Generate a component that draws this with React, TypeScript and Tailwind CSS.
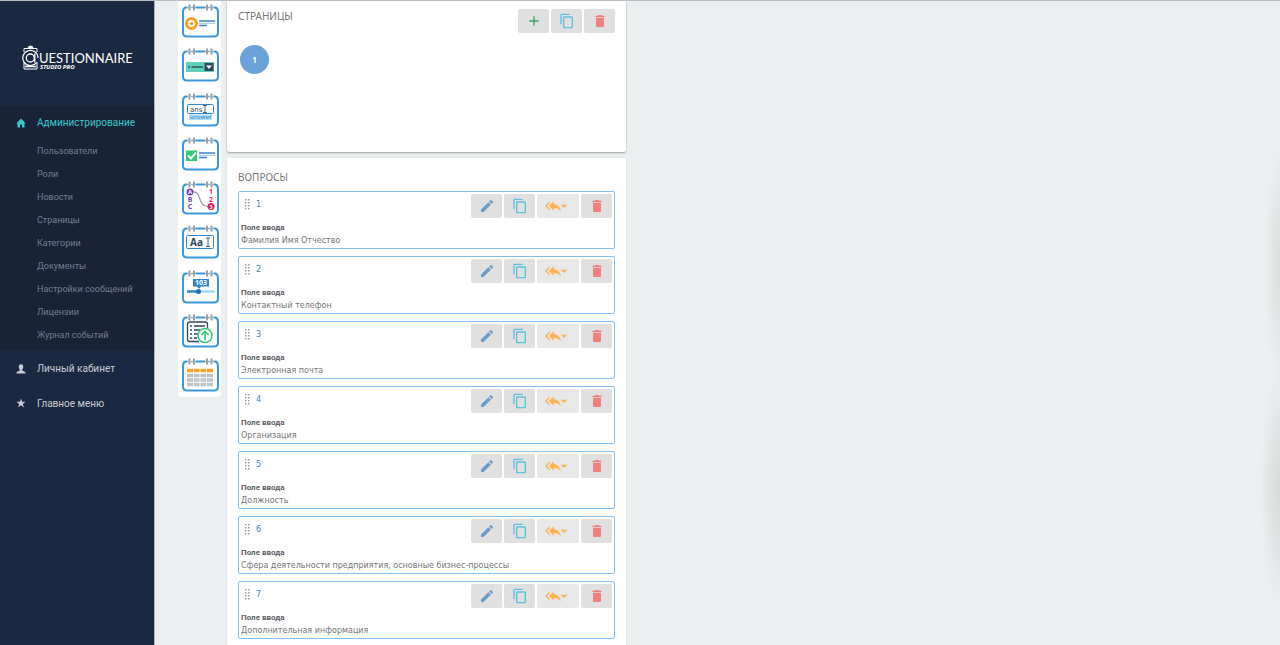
import type { ReactNode } from "react";
import { MdAdd, MdArrowDropDown, MdContentCopy, MdDelete, MdEdit, MdReplyAll } from "react-icons/md";

const adminLinks = [
  "Пользователи",
  "Роли",
  "Новости",
  "Страницы",
  "Категории",
  "Документы",
  "Настройки сообщений",
  "Лицензии",
  "Журнал событий",
];

const questions = [
  "Фамилия Имя Отчество",
  "Контактный телефон",
  "Электронная почта",
  "Организация",
  "Должность",
  "Сфера деятельности предприятия, основные бизнес-процессы",
  "Дополнительная информация",
];

function Logo() {
  return (
    <svg viewBox="0 0 114 30" className="h-[30px] w-[114px] text-white" fill="none" stroke="currentColor">
      <path d="M2 8V4.500H15V8M2 18V25H15V18" strokeWidth="1" />
      <path d="M6 4a2.500 2 0 0 1 5 0" fill="currentColor" strokeWidth="0.800" />
      <path d="M14.500 18.500A7.600 7.600 0 1 1 16 14" strokeWidth="1.200" />
      <circle cx="8.300" cy="14" r="4" strokeWidth="1.300" />
      <path d="M12.800 9.500V18.500M3 22.500h11" strokeWidth="1.300" />
      <text x="17" y="19" fontSize="13" fill="currentColor" stroke="none" className="font-['Lato']">
        UESTIONNAIRE
      </text>
      <text x="18" y="25" fontSize="6" fontStyle="italic" fontWeight="700" fill="currentColor" stroke="none" className="font-['Noto_Sans']">
        STUDIO PRO
      </text>
    </svg>
  );
}

function HomeIcon() {
  return (
    <svg viewBox="0 0 10 10" className="size-2.5" fill="currentColor">
      <path d="M5 .5 9.700 5.500H8.500V9.500H6V6.500H4V9.500H1.500V5.500H.3z" />
    </svg>
  );
}

function UserIcon() {
  return (
    <svg viewBox="0 0 10 10" className="size-2.5" fill="currentColor">
      <path d="M5 .3c1.600 0 2.300 1.200 2.200 2.600C7.100 4.500 6.500 5 6.300 5.600v.9c.4.700 3.200.9 3.200 2.200v.8h-9v-.8c0-1.300 2.800-1.500 3.200-2.200v-.9C3.500 5 2.900 4.500 2.800 2.900 2.700 1.500 3.400.3 5 .3z" />
    </svg>
  );
}

function StarIcon() {
  return (
    <svg viewBox="0 0 10 10" className="size-2.5" fill="currentColor">
      <path d="m5 .5 1.100 3.300h3.500L6.800 5.900l1.100 3.500L5 7.300 2.100 9.400l1.100-3.500L.4 3.800h3.500z" />
    </svg>
  );
}

function PaletteButton({ label, children }: { label: string; children: ReactNode }) {
  return (
    <button type="button" aria-label={label} className="block">
      <svg viewBox="0 0 38 34" className="h-[34px] w-[38px]" fill="none">
        <path
          d="M6 3.500H4.500Q2 4.500 2 8V28.500Q2 32.500 6 32.500H33Q37 32.500 37 28.500V8Q37 4.500 34.500 3.500H33M15 3.500H24"
          stroke="#3a97d9"
          strokeWidth="2"
        />
        <path d="M8.500 .5V6.500M13 .5V6.500M26 .5V6.500M30.500 .5V6.500" stroke="#9aa0a3" strokeWidth="2" />
        <path d="M6 3.500H8M10 3.500H12M14 3.500H15M24 3.500H25M27 3.500H29.500M31 3.500H33" stroke="#8db2c8" strokeWidth="1.500" />
        {children}
      </svg>
    </button>
  );
}

function Palette() {
  return (
    <nav aria-label="Типы вопросов" className="flex min-h-[396px] w-[43px] shrink-0 flex-col items-center justify-between self-start rounded-b bg-white pt-[3px] pb-[5px]">
      <PaletteButton label="Один вариант">
        <circle cx="10.500" cy="19.500" r="5" stroke="#f7a021" strokeWidth="3" />
        <circle cx="10.500" cy="19.500" r="1.700" fill="#f7a021" />
        <path d="M18 17H34M18 21.500H26" stroke="#4381c5" strokeWidth="1.500" />
        <path d="M18 19.300H34" stroke="#9dc3ec" />
      </PaletteButton>
      <PaletteButton label="Список">
        <path d="M5 14H33V24H5z" fill="#5fd0b9" />
        <path d="M23.500 15H32.500V23H23.500z" fill="#31465e" />
        <path d="M25 17.500H31L28 21z" fill="#fff" />
        <path d="M7 19H9M10.500 19H22" stroke="#2e5b62" strokeWidth="1.500" />
      </PaletteButton>
      <PaletteButton label="Текст с подсказкой">
        <rect x="6.500" y="11.500" width="26" height="9" rx="1" stroke="#3184c5" />
        <text x="9" y="18.500" fontSize="7" fill="#31465e" className="font-['DejaVu_Sans']">ans</text>
        <path d="M22 12.500H26M22 19.500H26M24 12.500V19.500" stroke="#31465e" strokeWidth="0.800" />
        <path d="M8 21.500H31V27H8z" fill="#b0defa" />
        <text x="9" y="26" fontSize="6" fill="#3184c5" className="font-['DejaVu_Sans']">answer</text>
      </PaletteButton>
      <PaletteButton label="Несколько вариантов">
        <path d="M5 13.500H16V24H5z" fill="#2fca70" />
        <path d="m7 18.500 3 3 5-6" stroke="#fff" strokeWidth="2" />
        <path d="M18 16H34M18 20.500H26" stroke="#4381c5" strokeWidth="1.500" />
        <path d="M18 18.300H34" stroke="#9dc3ec" />
      </PaletteButton>
      <PaletteButton label="Соответствие">
        <path d="M12 11C21 10 16 25.500 27 25.500" stroke="#89999b" strokeWidth="1.200" />
        <circle cx="9" cy="11" r="3.500" fill="#6a3caf" />
        <circle cx="30" cy="25.500" r="3.500" fill="#ec1763" />
        <g fontSize="7" fontWeight="700" textAnchor="middle" className="font-['Noto_Sans']">
          <text x="9" y="13.300" fontSize="6" fill="#fff">A</text>
          <text x="9" y="20.500" fill="#7443b3">B</text>
          <text x="9" y="28" fill="#7443b3">C</text>
          <text x="30" y="13" fill="#ec1763">1</text>
          <text x="30" y="20.500" fill="#ec1763">2</text>
          <text x="30" y="27.700" fontSize="6" fill="#fff">3</text>
        </g>
      </PaletteButton>
      <PaletteButton label="Поле ввода">
        <rect x="5.500" y="10.500" width="27" height="13" rx="1" stroke="#3184c5" />
        <text x="9" y="20.500" fontSize="10" fontWeight="700" fill="#31465e" className="font-['Noto_Sans']">Aa</text>
        <path d="M25 13H29M25 21.500H29M27 13V21.500" stroke="#58636c" />
      </PaletteButton>
      <PaletteButton label="Шкала">
        <path d="M12 9H28V16.500H20L18 19 16 16.500H12z" fill="#3184c5" />
        <text x="20" y="15.300" fontSize="7" fontWeight="700" textAnchor="middle" fill="#fff" className="font-['Noto_Sans']">103</text>
        <path d="M6 21.500H17" stroke="#3184c5" strokeWidth="2.500" />
        <path d="M17 21.500H34" stroke="#a1d7fb" strokeWidth="2.500" />
        <circle cx="17.500" cy="21.500" r="2.500" fill="#256eab" />
      </PaletteButton>
      <PaletteButton label="Загрузка файла">
        <path d="M18 27.500H9Q6.500 27.500 6.500 25.500V10Q6.500 8 9 8H24Q26.500 8 26.500 10V14" stroke="#31465e" strokeWidth="1.300" />
        <path d="M9 12H11M13 12H24M9 16H11M13 16H19M9 20H11M13 20H17M9 24H11M13 24H16" stroke="#31465e" strokeWidth="1.300" />
        <circle cx="24" cy="21.500" r="7" fill="#fff" stroke="#2fca70" strokeWidth="1.500" />
        <path d="M24 26V18M20.500 21 24 17.500l3.500 3.500" stroke="#2fca70" strokeWidth="1.600" />
      </PaletteButton>
      <PaletteButton label="Таблица">
        <path d="M6 12.500H32" stroke="#f2a12b" strokeWidth="3.500" />
        <path d="M6 17.500H32M6 22H32M6 26.500H32" stroke="#bfc4c7" strokeWidth="3.500" />
        <path d="M12.500 10.500V28.500M19 10.500V28.500M25.500 10.500V28.500" stroke="#fff" strokeWidth="0.800" />
      </PaletteButton>
    </nav>
  );
}

function ToolButton({ label, className = "w-[31px] bg-[#e0e0e0]", children }: { label: string; className?: string; children: ReactNode }) {
  return (
    <button type="button" aria-label={label} className={`flex h-6 items-center justify-center rounded-xs ${className}`}>
      {children}
    </button>
  );
}

function DragHandle() {
  return (
    <svg viewBox="0 0 5 11" className="h-[11px] w-[5px]" fill="#9a9a9a">
      {[0, 3, 6, 9].map((y) => (
        <g key={y}>
          <rect x="0" y={y} width="1.500" height="1.500" />
          <rect x="3" y={y} width="1.500" height="1.500" />
        </g>
      ))}
    </svg>
  );
}

function QuestionCard({ index, text }: { index: number; text: string }) {
  return (
    <li className="h-[58px] rounded-xs border border-[#84bff2] px-0.5 pt-0.5">
      <div className="flex h-[27px] items-start justify-between">
        <div className="flex items-center gap-1.5 pt-1 pl-1">
          <DragHandle />
          <span className="pt-px font-['DejaVu_Sans',sans-serif] text-[8px] leading-3 text-[#3f7fb5]">{index}</span>
        </div>
        <div className="flex gap-0.5">
          <ToolButton label="Редактировать">
            <MdEdit className="size-4 text-[#6b9bc9]" />
          </ToolButton>
          <ToolButton label="Копировать">
            <MdContentCopy className="size-4 text-[#5bc0de]" />
          </ToolButton>
          <ToolButton label="Переместить" className="w-[42px] bg-[#e8e8e8] pr-1">
            <MdReplyAll className="size-4 shrink-0 text-[#ffb152]" />
            <MdArrowDropDown className="-mr-1 -ml-[5px] size-4 shrink-0 text-[#ffb152]" />
          </ToolButton>
          <ToolButton label="Удалить">
            <MdDelete className="size-4 text-[#f08080]" />
          </ToolButton>
        </div>
      </div>
      <p className="font-['Roboto',sans-serif] text-[8px] leading-[13px] font-bold text-[#606060]">Поле ввода</p>
      <p className="font-['DejaVu_Sans',sans-serif] text-[8px] leading-[13px] text-[#757575]">{text}</p>
    </li>
  );
}

function Sidebar() {
  return (
    <aside className="w-[155px] shrink-0 border-r border-[#a9b0b8] bg-[#1a2942] font-['Roboto',sans-serif] text-[10px]">
      <div className="flex h-[104px] items-start pt-[43px] pl-[22px]">
        <Logo />
      </div>
      <div className="bg-[#182338] pb-1">
        <a href="#admin" className="flex h-[35px] items-center gap-[11px] pl-4 text-[#3cc8c8]">
          <HomeIcon />
          Администрирование
        </a>
        <ul className="pl-[37px] text-[9px] leading-[23px] text-[#747d90]">
          {adminLinks.map((item) => (
            <li key={item}>
              <a href="#admin">{item}</a>
            </li>
          ))}
        </ul>
      </div>
      <a href="#account" className="flex h-[35px] items-center gap-[11px] pl-4 text-[#c9ccd0]">
        <UserIcon />
        Личный кабинет
      </a>
      <a href="#menu" className="flex h-[34px] items-center gap-[11px] pl-4 text-[#c9ccd0]">
        <StarIcon />
        Главное меню
      </a>
    </aside>
  );
}

export default function App() {
  return (
    <div className="relative flex h-screen overflow-hidden border-t border-[#b9bdbf] bg-[#ebeff0]">
      <Sidebar />
      <main className="flex flex-1 gap-1.5 pl-[23px]">
        <Palette />
        <div className="flex w-[399px] flex-col gap-1.5">
          <section className="h-[151px] shrink-0 rounded-b-xs bg-white px-[11px] pt-2 shadow-[0_1px_2px_rgba(0,0,0,0.35)]">
            <div className="flex items-start justify-between">
              <h2 className="font-['Noto_Sans',sans-serif] text-[10px] leading-[14px] text-[#757575]">СТРАНИЦЫ</h2>
              <div className="flex gap-0.5">
                <ToolButton label="Добавить страницу">
                  <MdAdd className="size-4 text-[#2fa866]" />
                </ToolButton>
                <ToolButton label="Копировать страницу">
                  <MdContentCopy className="size-4 text-[#5bc0de]" />
                </ToolButton>
                <ToolButton label="Удалить страницу">
                  <MdDelete className="size-4 text-[#f08080]" />
                </ToolButton>
              </div>
            </div>
            <button type="button" className="mt-3 ml-0.5 size-[29px] rounded-full bg-[#6aa2db] font-['Noto_Sans',sans-serif] text-[8px] font-bold text-white">
              1
            </button>
          </section>
          <section className="shrink-0 rounded-t-xs bg-white px-[11px] pt-3 pb-3 shadow-[0_1px_2px_rgba(0,0,0,0.15)]">
            <h2 className="font-['Noto_Sans',sans-serif] text-[10px] leading-[14px] text-[#757575]">ВОПРОСЫ</h2>
            <ul className="mt-[7px] flex flex-col gap-[7px]">
              {questions.map((text, i) => (
                <QuestionCard key={text} index={i + 1} text={text} />
              ))}
            </ul>
          </section>
        </div>
      </main>
      {/* soft shading along the right edge */}
      <div className="pointer-events-none absolute top-36 right-0 h-60 w-4 bg-[radial-gradient(16px_120px_at_100%_50%,#dcdedd,transparent)]" />
      <div className="pointer-events-none absolute top-[368px] right-0 h-60 w-5 bg-[radial-gradient(20px_120px_at_100%_50%,#d8dad9,transparent)]" />
    </div>
  );
}
